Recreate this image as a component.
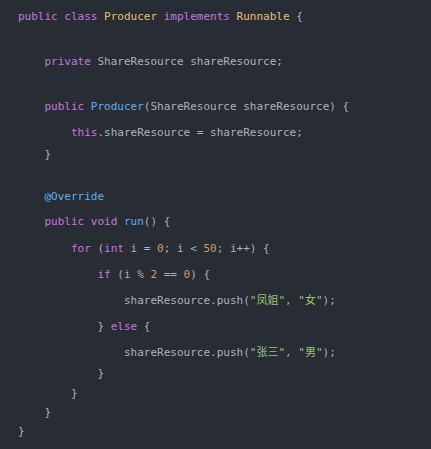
import React from 'react';

type Tok = [string, string];

const C = {
  kw: 'text-[#c678dd]',
  cls: 'text-[#e5c07b]',
  fn: 'text-[#61afef]',
  txt: 'text-[#abb2bf]',
  num: 'text-[#d19a66]',
  str: 'text-[#98c379]',
};

const lines: { mt: string; indent: number; toks: Tok[] }[] = [
  { mt: 'mt-0', indent: 0, toks: [['public class ', C.kw], ['Producer ', C.cls], ['implements ', C.kw], ['Runnable ', C.cls], ['{', C.txt]] },
  { mt: 'mt-[26px]', indent: 1, toks: [['private ', C.kw], ['ShareResource shareResource;', C.txt]] },
  { mt: 'mt-[26px]', indent: 1, toks: [['public ', C.kw], ['Producer', C.fn], ['(ShareResource shareResource) {', C.txt]] },
  { mt: 'mt-[7px]', indent: 2, toks: [['this', C.kw], ['.shareResource = shareResource;', C.txt]] },
  { mt: 'mt-[3px]', indent: 1, toks: [['}', C.txt]] },
  { mt: 'mt-[23px]', indent: 1, toks: [['@Override', C.fn]] },
  { mt: 'mt-[6px]', indent: 1, toks: [['public void ', C.kw], ['run', C.fn], ['() {', C.txt]] },
  { mt: 'mt-[8px]', indent: 2, toks: [['for ', C.kw], ['(', C.txt], ['int ', C.kw], ['i = ', C.txt], ['0', C.num], ['; i < ', C.txt], ['50', C.num], ['; i++) {', C.txt]] },
  { mt: 'mt-[7px]', indent: 3, toks: [['if ', C.kw], ['(i % ', C.txt], ['2', C.num], [' == ', C.txt], ['0', C.num], [') {', C.txt]] },
  { mt: 'mt-[7px]', indent: 4, toks: [['shareResource.push(', C.txt], ['"凤姐"', C.str], [', ', C.txt], ['"女"', C.str], [');', C.txt]] },
  { mt: 'mt-[7px]', indent: 3, toks: [['} ', C.txt], ['else ', C.kw], ['{', C.txt]] },
  { mt: 'mt-[7px]', indent: 4, toks: [['shareResource.push(', C.txt], ['"张三"', C.str], [', ', C.txt], ['"男"', C.str], [');', C.txt]] },
  { mt: 'mt-[2px]', indent: 3, toks: [['}', C.txt]] },
  { mt: 'mt-[1px]', indent: 2, toks: [['}', C.txt]] },
  { mt: 'mt-0', indent: 1, toks: [['}', C.txt]] },
  { mt: 'mt-0', indent: 0, toks: [['}', C.txt]] },
];

function App() {
  return (
    <div className="min-h-screen w-[431px] h-[449px] bg-[#282c34] overflow-hidden">
      <pre className="pt-[7px] pl-[18px] text-[11px] leading-[19px] font-['DejaVu_Sans_Mono','Noto_Sans_CJK_SC',monospace] text-[#abb2bf]">
        {lines.map((l, i) => (
          <div key={i} className={`h-[19px] whitespace-pre ${l.mt}`}>
            {'    '.repeat(l.indent)}
            {l.toks.map(([t, c], j) => (
              <span key={j} className={c}>{t}</span>
            ))}
          </div>
        ))}
      </pre>
    </div>
  );
}

export default App;
